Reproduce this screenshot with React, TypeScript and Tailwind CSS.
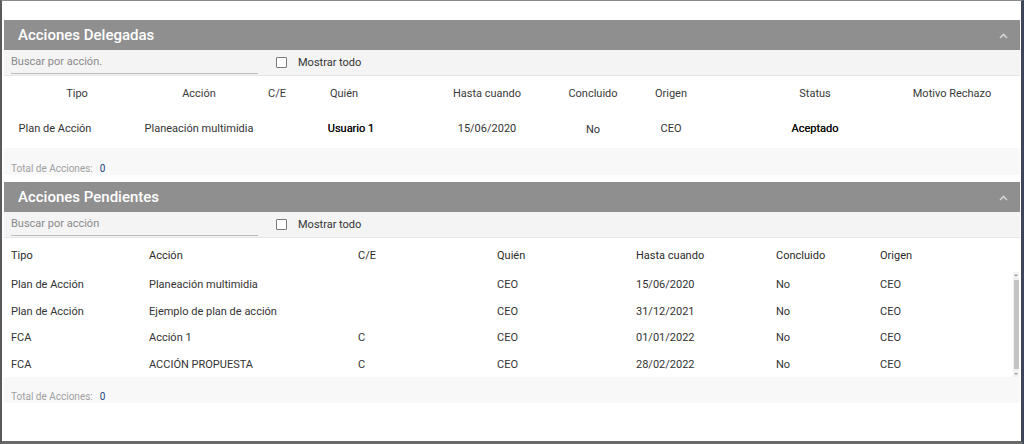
import React from "react";

const font = { fontFamily: "Roboto, 'Noto Sans', Arial, sans-serif" };

type Col = { label: string; cell: string };

// Delegated actions: centred columns
const delegCols: Col[] = [
  { label: "Tipo", cell: "w-[146px]" },
  { label: "Acción", cell: "w-[98px]" },
  { label: "C/E", cell: "w-[58px]" },
  { label: "Quién", cell: "w-[76px]" },
  { label: "Hasta cuando", cell: "w-[110px] ml-[50px]" },
  { label: "Concluido", cell: "w-[102px]" },
  { label: "Origen", cell: "w-[54px]" },
  { label: "Status", cell: "w-[140px] ml-[47px]" },
  { label: "Motivo Rechazo", cell: "w-[134px]" },
];

const delegRow = [
  { text: "Plan de Acción", extra: "pr-[44px]" },
  { text: "Planeación multimidia", extra: "" },
  { text: "", extra: "" },
  { text: "Usuario 1", extra: "pl-[14px] text-[#111] [text-shadow:0_0_0.2px_#111]" },
  { text: "15/06/2020", extra: "" },
  { text: "No", extra: "pt-[2px]" },
  { text: "CEO", extra: "" },
  { text: "Aceptado", extra: "text-[#111] [text-shadow:0_0_0.3px_#111]" },
  { text: "", extra: "" },
];

const pendCols = ["Tipo", "Acción", "C/E", "Quién", "Hasta cuando", "Concluido", "Origen"];

const pendRows = [
  ["Plan de Acción", "Planeación multimidia", "", "CEO", "15/06/2020", "No", "CEO"],
  ["Plan de Acción", "Ejemplo de plan de acción", "", "CEO", "31/12/2021", "No", "CEO"],
  ["FCA", "Acción 1", "C", "CEO", "01/01/2022", "No", "CEO"],
  ["FCA", "ACCIÓN PROPUESTA", "C", "CEO", "28/02/2022", "No", "CEO"],
];

function PanelHeader({ title }: { title: string }) {
  return (
    <div className="flex items-center justify-between h-[30px] bg-[#8f8f8f] pl-[14px] pr-[12px]">
      <span className="text-white text-[15px] font-medium pt-[1px]">{title}</span>
      <svg width="9" height="6" viewBox="0 0 9 6" className="mt-[1px]">
        <polyline points="1,5 4.5,1.5 8,5" fill="none" stroke="#d4d4d4" strokeWidth="1.6" />
      </svg>
    </div>
  );
}

function SearchBar({ placeholder }: { placeholder: string }) {
  return (
    <div className="flex items-center h-[26px] bg-[#f4f4f4] border-b border-[#e6e6e6] pl-[7px]">
      <div className="w-[247px] h-[22px] border-b border-[#bdbdbd] text-[11px] text-[#8a8a8a] pt-[2px]">
        {placeholder}
      </div>
      <div className="ml-[18px] w-[11px] h-[11px] border border-[#7a7a7a] rounded-[1px] bg-white"></div>
      <span className="ml-[11px] text-[11px] text-[#333] pt-[1px]">Mostrar todo</span>
    </div>
  );
}

function Footer({ pad }: { pad: string }) {
  return (
    <div className={`h-[26px] bg-[#f8f8f8] pl-[7px] text-[10px] flex items-start ${pad}`}>
      <span className="text-[#a0a0a0]">Total de Acciones:</span>
      <span className="ml-[7px] text-[#24467e]">0</span>
    </div>
  );
}

function Scrollbar() {
  return (
    <div className="w-[6px] flex flex-col items-center bg-[#f1f1f1] mr-[1px]">
      <div className="mt-[2px] w-0 h-0 border-x-[2px] border-x-transparent border-b-[2px] border-b-[#9a9a9a]"></div>
      <div className="mt-[4px] w-[5px] flex-1 bg-[#c3c3c3]"></div>
      <div className="mt-[4px] mb-[2px] w-0 h-0 border-x-[2px] border-x-transparent border-t-[2px] border-t-[#9a9a9a]"></div>
    </div>
  );
}

export default function App() {
  return (
    <div
      style={font}
      className="relative w-[1024px] h-[444px] bg-white border-t border-t-[#8a8a8a] border-l-2 border-l-[#5a5a5a] border-r-[3px] border-r-[#3c4658] border-b-[3px] border-b-[#6a6a6a] pt-[19px] pl-[2px] pr-[1px] overflow-hidden"
    >
      {/* Acciones Delegadas */}
      <section>
        <PanelHeader title="Acciones Delegadas" />
        <SearchBar placeholder="Buscar por acción." />
        <div className="flex items-center h-[34px] pt-[2px] text-[11px] text-[#3a3a3a]">
          {delegCols.map((c) => (
            <div key={c.label} className={`shrink-0 flex justify-center whitespace-nowrap ${c.cell}`}>
              {c.label}
            </div>
          ))}
        </div>
        <div className="flex items-center h-[38px] text-[11px] text-[#333]">
          {delegCols.map((c, i) => (
            <div
              key={c.label}
              className={`shrink-0 flex justify-center whitespace-nowrap ${c.cell} ${delegRow[i].extra}`}
            >
              {delegRow[i].text}
            </div>
          ))}
        </div>
        <Footer pad="pt-[13px] h-[27px]" />
      </section>

      <div className="h-[7px]"></div>

      {/* Acciones Pendientes */}
      <section>
        <PanelHeader title="Acciones Pendientes" />
        <SearchBar placeholder="Buscar por acción" />
        <div className="grid grid-cols-[138px_209px_139px_139px_140px_104px_1fr] items-center h-[34px] pt-[2px] pl-[7px] text-[11px] text-[#2a2a2a]">
          {pendCols.map((c) => (
            <div key={c}>{c}</div>
          ))}
        </div>
        <div className="flex h-[105px]">
          <div className="flex-1">
            {pendRows.map((r, i) => (
              <div
                key={i}
                className="grid grid-cols-[138px_209px_139px_139px_140px_104px_1fr] items-center h-[26.5px] pl-[7px] text-[11px] text-[#333]"
              >
                {r.map((v, j) => (
                  <div key={j} className="whitespace-nowrap">{v}</div>
                ))}
              </div>
            ))}
          </div>
          <Scrollbar />
        </div>
        <Footer pad="pt-[12px]" />
      </section>

      <div className="absolute right-[-3px] top-[252px] w-[3px] h-[7px] bg-[#2f6fd6]"></div>
    </div>
  );
}
